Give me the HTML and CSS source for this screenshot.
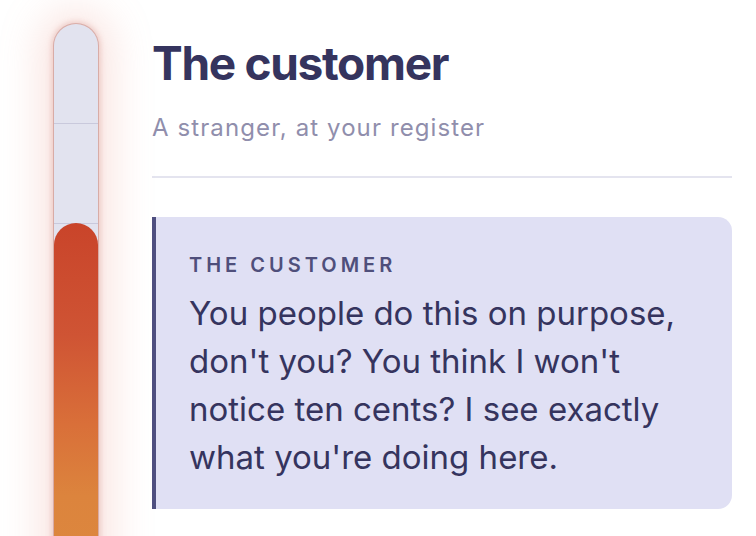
FILE: index.html
```html
<!DOCTYPE html>
<html lang="en">
<head>
    <meta charset="UTF-8">
    <meta name="viewport" content="width=device-width, initial-scale=1.0">
    <title>The customer</title>
    <link rel="stylesheet" href="styles.css">
</head>
<body>
    <div class="scene">
        <div class="meter">
            <div class="meter-track">
                <div class="tick"></div>
                <div class="tick"></div>
                <div class="tick"></div>
                <div class="tick"></div>
                <div class="meter-fill"></div>
            </div>
        </div>

        <div class="panel">
            <h1>The customer</h1>
            <div class="subtitle">A stranger, at your register</div>
            <hr class="divider">

            <div class="speech">
                <div class="speaker">THE CUSTOMER</div>
                <p class="line">You people do this on purpose, don't you? You think I won't notice ten cents? I see exactly what you're doing here.</p>
            </div>
        </div>
    </div>
</body>
</html>
```

FILE: styles.css
```css
body {
    font-family: Inter, 'Noto Sans', sans-serif;
    background-color: #ffffff;
    color: #35345e;
    margin: 0;
    padding: 0;
    overflow: hidden;
    height: 536px;
}

.scene {
    display: flex;
    gap: 54px;
    padding: 24px 24px 0 54px;
}

/* patience meter on the left */
.meter {
    flex: none;
    width: 44px;
}

.meter-track {
    position: relative;
    width: 44px;
    height: 600px;
    border-radius: 22px 22px 0 0;
    background-color: #e2e3ef;
    box-shadow: 0 0 0 1px rgba(196, 140, 135, 0.55), 0 0 5px 3px rgba(215, 150, 140, 0.35), 0 0 40px 14px rgba(236, 150, 135, 0.26);
    overflow: hidden;
    display: flex;
    flex-direction: column;
}

.tick {
    flex: none;
    height: 100px;
    border-bottom: 1px solid #c9c9dc;
    box-sizing: border-box;
}

.meter-fill {
    position: absolute;
    left: 0;
    right: 0;
    top: 199px;
    bottom: 0;
    border-radius: 22px 22px 0 0;
    background: linear-gradient(to bottom, #c9442a 0%, #cf5434 28%, #d96f39 50%, #dc843d 68%, #dd8a3f 100%);
}

.panel {
    flex: 1;
    min-width: 0;
}

h1 {
    font-size: 46px;
    font-weight: 700;
    letter-spacing: -1.3px;
    color: #35345e;
    margin: 13px 0 0;
    line-height: 52px;
}

.subtitle {
    font-size: 24px;
    letter-spacing: 1.1px;
    color: #908eac;
    margin-top: 24px;
    line-height: 30px;
}

.divider {
    border: none;
    border-top: 2px solid #e4e4ef;
    margin: 33px 0 0;
}

.speech {
    margin-top: 39px;
    background-color: #e0e0f4;
    border-left: 4px solid #4f4f80;
    border-radius: 0 14px 14px 0;
    padding: 36px 28px 28px 33px;
}

.speaker {
    font-size: 20px;
    font-weight: 600;
    letter-spacing: 4px;
    color: #4f4f7b;
    line-height: 24px;
}

.line {
    font-size: 33px;
    line-height: 48px;
    color: #35345e;
    margin: 12px 0 0;
}
```
